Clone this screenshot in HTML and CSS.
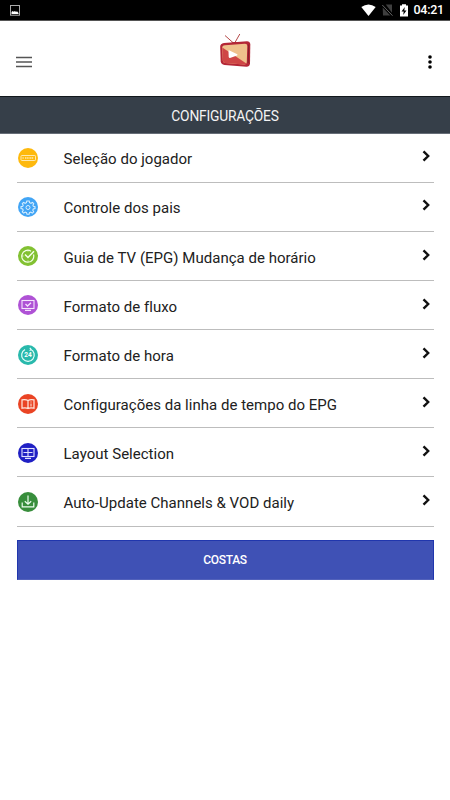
FILE: index.html
```html
<!DOCTYPE html>
<html lang="pt">
<head>
<meta charset="utf-8">
<title>Configurações</title>
<link rel="stylesheet" href="styles.css">
</head>
<body>
<div class="status">
  <svg class="shot" width="10" height="11" viewBox="0 0 10 11"><rect x=".5" y=".5" width="9" height="9.7" fill="none" stroke="#aaa"/><path d="M1.5 9V7l1.2-1 1 .7L5 6l1 1 1-.8L8.5 8v1z" fill="#fff"/></svg>
  <div class="indicators">
    <svg width="15" height="13" viewBox="0 0 15 13"><path d="M.3 3Q7.5-2 14.7 3L7.5 12z" fill="#fff"/></svg>
    <svg width="11" height="12" viewBox="0 0 11 12"><path d="M3.8.5H10V8.7zM.7 3.5 8.3 11.5H1z" fill="#3f3f3f"/><path d="M.3 1 10.5 11.7" stroke="#666"/></svg>
    <svg width="8" height="13" viewBox="0 0 8 13"><path d="M0 1.5h2V.3h4v1.2h2V12.5H0z" fill="#fff"/><path d="M4.8 3 1.5 7.4h2.2L3.2 11 6.5 6.4H4.3z" fill="#000"/></svg>
    <span class="clock">04:21</span>
  </div>
</div>
<header class="toolbar">
  <svg class="menu" width="16" height="12" viewBox="0 0 16 12"><path d="M0 1.5h16M0 6h16M0 10.5h16" stroke="#555" stroke-width="1.3"/></svg>
  <svg class="logo" width="32" height="36" viewBox="0 0 32 36">
    <path d="M5 2.5 14 10.5M19.8 1 14.7 10" fill="none" stroke="#b64949" stroke-width="1"/>
    <path d="M11 10q4-2 8 0z" fill="#9f2831"/>
    <path d="M4 10 27 8.2Q30 8.2 30.3 11.2L30 30.5Q29.5 33.8 26.5 33.8L4.5 32Q1 31.5.7 28.3L.2 13.8Q.2 10.5 4 10z" fill="#b42736"/>
    <path d="M5 12.2 25 10.8Q27.3 10.8 27.3 13L26.8 29.3Q26.5 31.6 24.2 31.5L5 30Q3 29.7 2.8 27.5L2.2 14.7Q2.2 12.4 5 12.2z" fill="#efc18c"/>
    <path d="M2.3 14.5 26.4 30.4Q25.5 31.6 24.2 31.5L5 30Q3 29.7 2.8 27.5z" fill="#cf4646"/>
    <path d="M8.5 18.3Q8.2 17.2 9.5 17.4L17.3 21.2Q17.9 22 17 22.6L10 25Q8.8 25 8.7 24z" fill="#fff"/>
    <path d="M28.7 11.5 28.2 30" stroke="#84212c"/>
  </svg>
  <svg class="more" width="4" height="14" viewBox="0 0 4 14"><circle cx="2" cy="2" r="1.8"/><circle cx="2" cy="7" r="1.8"/><circle cx="2" cy="12" r="1.8"/></svg>
</header>
<h1 class="title">CONFIGURAÇÕES</h1>
<main>
  <ul class="list">
    <li class="row">
      <svg class="icon" viewBox="0 0 20 20"><circle cx="10" cy="10" r="10" fill="#feb90d"/><g fill="none" stroke="#ffe9b0"><rect x="3" y="7.5" width="14.5" height="5" rx=".7"/><path d="M4.5 10h1.2M7 10h8.7" stroke-width="1.4" stroke-dasharray="1.2 .5"/></g></svg>
      <span class="label">Seleção do jogador</span>
      <svg class="chevron" viewBox="0 0 8 12"><path d="M1.5 1.3 6.2 6 1.5 10.7"/></svg>
    </li>
    <li class="row">
      <svg class="icon" viewBox="0 0 20 20"><circle cx="10" cy="10" r="10" fill="#42a5f5"/><g fill="none" stroke="#d7eeff"><path d="M8.8 4h2.4l.4 1.7 1.4.6 1.5-.9 1.2 1.3-.8 1.5.5 1.2 1.6.4v1.8l-1.7.4-.5 1.3.9 1.5-1.4 1.3-1.5-1-1.3.6-.4 1.6H9l-.5-1.6-1.3-.6-1.5 1-1.4-1.3.9-1.5-.5-1.3-1.7-.4V9.8l1.7-.4.5-1.2-.9-1.5 1.3-1.3 1.5.9 1.3-.6z" stroke-width="1.1"/><circle cx="10" cy="10.5" r="2"/></g></svg>
      <span class="label">Controle dos pais</span>
      <svg class="chevron" viewBox="0 0 8 12"><path d="M1.5 1.3 6.2 6 1.5 10.7"/></svg>
    </li>
    <li class="row">
      <svg class="icon" viewBox="0 0 20 20"><circle cx="10" cy="10" r="10" fill="#82c132"/><g fill="none" stroke="#f5ffe9"><path d="M15.5 8.5A6 6 0 1 1 13 5.2" stroke-width="1.2"/><path d="m7 8.5 3 3 6-6.3" stroke-width="1.5"/><path d="M10 4v1.5M4 10h1.5M10 14.5V16" stroke-width=".8"/></g></svg>
      <span class="label">Guia de TV (EPG) Mudança de horário</span>
      <svg class="chevron" viewBox="0 0 8 12"><path d="M1.5 1.3 6.2 6 1.5 10.7"/></svg>
    </li>
    <li class="row">
      <svg class="icon" viewBox="0 0 20 20"><circle cx="10" cy="10" r="10" fill="#af52d5"/><g fill="none" stroke="#f5e4fd"><rect x="4" y="5.5" width="12" height="8" stroke-width="1.1"/><path d="m7.5 9 2 2 3.5-3.3M7 15.4h6" stroke-width="1.3"/></g></svg>
      <span class="label">Formato de fluxo</span>
      <svg class="chevron" viewBox="0 0 8 12"><path d="M1.5 1.3 6.2 6 1.5 10.7"/></svg>
    </li>
    <li class="row">
      <svg class="icon" viewBox="0 0 20 20"><circle cx="10" cy="10" r="10" fill="#29b9ac"/><path d="M12.5 4.3A6.3 6.3 0 1 1 7 4.5M11.8 2.9l1.3 1.5-1.5 1.2" fill="none" stroke="#e5fffb" stroke-width="1.2"/><text x="10" y="12.4" class="hours">24</text></svg>
      <span class="label">Formato de hora</span>
      <svg class="chevron" viewBox="0 0 8 12"><path d="M1.5 1.3 6.2 6 1.5 10.7"/></svg>
    </li>
    <li class="row">
      <svg class="icon" viewBox="0 0 20 20"><circle cx="10" cy="10" r="10" fill="#ea4424"/><g fill="none" stroke="#ffe9e0" stroke-width="1.2"><path d="M10 6.5Q8 5.2 4 5.8v8.4q4-.7 6 .3 2-1 6-.3V5.8Q12 5.2 10 6.5zv7.5"/><path d="M13 7.5v1M13 9.5v3" stroke-width="1"/></g></svg>
      <span class="label">Configurações da linha de tempo do EPG</span>
      <svg class="chevron" viewBox="0 0 8 12"><path d="M1.5 1.3 6.2 6 1.5 10.7"/></svg>
    </li>
    <li class="row">
      <svg class="icon" viewBox="0 0 20 20"><circle cx="10" cy="10" r="10" fill="#2020c4"/><g fill="none" stroke="#e2e2ff" stroke-width="1.1"><rect x="4" y="5.5" width="12" height="8"/><path d="M10 6v7M5.5 9.5h9M7 15.4h6"/></g></svg>
      <span class="label">Layout Selection</span>
      <svg class="chevron" viewBox="0 0 8 12"><path d="M1.5 1.3 6.2 6 1.5 10.7"/></svg>
    </li>
    <li class="row">
      <svg class="icon" viewBox="0 0 20 20"><circle cx="10" cy="10" r="10" fill="#388e3c"/><path d="M10 3.5v8.5M6.8 9.3l3.2 3 3.2-3M4.2 10.5v4.3h11.6v-4.3" fill="none" stroke="#edfff0" stroke-width="1.2"/></svg>
      <span class="label">Auto-Update Channels &amp; VOD daily</span>
      <svg class="chevron" viewBox="0 0 8 12"><path d="M1.5 1.3 6.2 6 1.5 10.7"/></svg>
    </li>
  </ul>
  <button class="back">COSTAS</button>
</main>
</body>
</html>
```

FILE: styles.css
```css
* { box-sizing: border-box; }
body { margin: 0; background: #fff; font-family: Roboto, sans-serif; color: #212121; }
svg { display: block; flex: none; }
.status { height: 21px; background: #000; border-bottom: 1px solid #555; display: flex; justify-content: space-between; align-items: center; padding: 0 7px 0 10px; }
.indicators { display: flex; align-items: center; gap: 6px; }
.indicators svg:nth-child(3) { margin-left: 1px; }
.clock { color: #fff; font-size: 12.5px; font-weight: 500; line-height: 22px; width: 29.5px; letter-spacing: -.25px; white-space: nowrap; }
.toolbar { height: 75px; display: flex; justify-content: space-between; padding: 0 18px 0 15.5px; }
.menu { margin-top: 35px; }
.logo { margin: 11.5px 0 0 12.5px; }
.more { margin-top: 34px; }
.title { margin: 0; height: 37.5px; background: #363f49; border-top: 1px solid #11171c; border-bottom: 1px solid #666d77; color: #f4f4f4; font-size: 13.8px; font-weight: 400; line-height: 38px; text-align: center; letter-spacing: -.2px; }
main { padding: 0 16.5px; }
.list { list-style: none; margin: 0; padding: 0; }
.row { height: 49.15px; border-bottom: 1px solid #bdbdbd; display: flex; align-items: center; padding: 0 3.5px 0 1.5px; }
.icon { width: 20px; height: 20px; margin: 1px 25.5px 0 0; }
.hours { font: 700 6.5px Roboto, sans-serif; fill: #fff; text-anchor: middle; }
.label { flex: 1; font-size: 15px; line-height: 20px; padding-top: 3.4px; white-space: nowrap; letter-spacing: .02px; }
.chevron { width: 8px; height: 12px; margin-bottom: 2.6px; fill: none; stroke: #111; stroke-width: 2.4; }
.back { display: block; width: 100%; height: 40px; margin: 13.3px 0 0; padding: 0; border: 1px solid #2036ad; border-bottom-color: #5362bb; background: #3f51b5; box-shadow: 0 2px 0 #d9d9d9; color: #fff; font: 500 12px Roboto, sans-serif; letter-spacing: -.3px; }
```
